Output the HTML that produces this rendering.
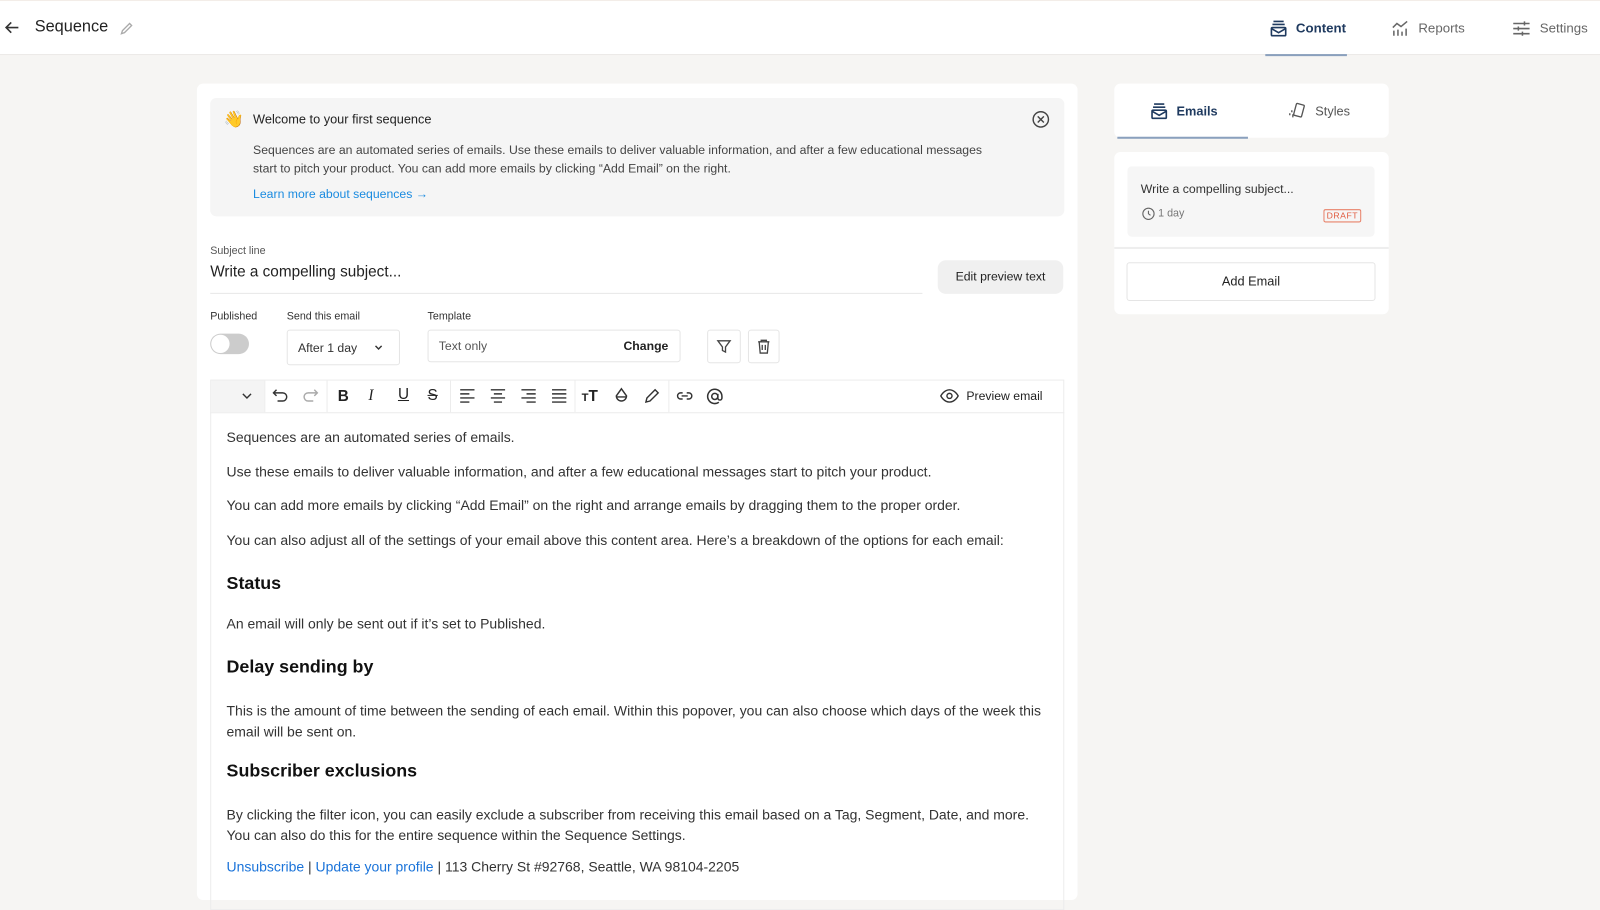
<!DOCTYPE html>
<html><head><meta charset="utf-8"><style>
*{box-sizing:border-box;margin:0;padding:0}
body{width:1600px;height:881px;overflow:hidden;background:#f6f5f3;font-family:"Liberation Sans",sans-serif;color:#222;position:relative}
#w{position:absolute;left:0;top:0;width:1568px;height:864px;transform:scale(1.0204);transform-origin:0 0}
.abs{position:absolute}
.hdr{left:0;top:0;width:1600px;height:54px;background:#fff;border-bottom:1px solid #ebe9e6;border-top:1px solid #f3ede8}
svg{display:block}
.t{white-space:nowrap}
.body p{font-size:13.7px;color:#333;white-space:nowrap;position:absolute;left:222px}
.body h3{font-size:17.5px;font-weight:bold;color:#111;position:absolute;left:222px}
.ic{position:absolute;top:379px}
a{color:#1a73d9}
</style></head><body><div id="w">
<div class="abs hdr"></div>
<svg class="abs" style="left:4px;top:19px" width="16" height="16" viewBox="0 0 16 16"><path d="M14 8H2M7 3L2 8l5 5" stroke="#333" stroke-width="1.6" fill="none"/></svg>
<div class="abs t" style="left:34px;top:18px;font-size:16px;color:#222">Sequence</div>
<svg class="abs" style="left:116px;top:20px" width="16" height="16" viewBox="0 0 16 16"><path d="M3 13l1-3 7-7 2 2-7 7z" stroke="#aaa" stroke-width="1.3" fill="none"/></svg>

<svg class="abs" style="left:1244px;top:19px" width="18" height="18" viewBox="0 0 18 18" fill="none" stroke="#1f3a5f" stroke-width="1.6"><path d="M4 2h10M3 5h12"/><rect x="2" y="8" width="14" height="8" rx="1"/><path d="M2 9l7 4 7-4"/></svg>
<div class="abs t" style="left:1270px;top:20px;font-size:13px;font-weight:bold;color:#1f3a5f">Content</div>
<div class="abs" style="left:1240px;top:53px;width:80px;height:2px;background:#8aa0bd"></div>
<svg class="abs" style="left:1363px;top:19px" width="18" height="18" viewBox="0 0 18 18" fill="none" stroke="#666" stroke-width="1.5"><path d="M2 8l4-4 4 3 6-5M3 11v5M7 10v6M11 12v4M15 9v7"/></svg>
<div class="abs t" style="left:1390px;top:20px;font-size:13px;color:#666">Reports</div>
<svg class="abs" style="left:1482px;top:19px" width="18" height="18" viewBox="0 0 18 18" fill="none" stroke="#666" stroke-width="1.5"><path d="M1 4h16M1 9h16M1 14h16M12 2v4M6 7v4M10 12v4"/></svg>
<div class="abs t" style="left:1509px;top:20px;font-size:13px;color:#666">Settings</div>

<div class="abs" style="left:193px;top:82px;width:863px;height:800px;background:#fff;border-radius:6px"></div>
<div class="abs" style="left:206px;top:96px;width:837px;height:116px;background:#f5f5f5;border-radius:6px"></div>
<div class="abs t" style="left:219px;top:107px;font-size:16px">👋</div>
<div class="abs t" style="left:248px;top:110px;font-size:12.5px;color:#222">Welcome to your first sequence</div>
<div class="abs t" style="left:248px;top:138px;font-size:12px;color:#444;line-height:18px">Sequences are an automated series of emails. Use these emails to deliver valuable information, and after a few educational messages<br>start to pitch your product. You can add more emails by clicking “Add Email” on the right.</div>
<div class="abs t" style="left:248px;top:183px;font-size:12px;color:#1a8be0">Learn more about sequences →</div>
<svg class="abs" style="left:1011px;top:108px" width="18" height="18" viewBox="0 0 18 18" fill="none" stroke="#444" stroke-width="1.4"><circle cx="9" cy="9" r="7.5"/><path d="M6 6l6 6M12 6l-6 6"/></svg>

<div class="abs t" style="left:206px;top:240px;font-size:10.5px;color:#555">Subject line</div>
<div class="abs t" style="left:206px;top:258px;font-size:15px;color:#222">Write a compelling subject...</div>
<div class="abs" style="left:206px;top:287px;width:698px;height:1px;background:#e8e8e8"></div>
<div class="abs t" style="left:919px;top:255px;width:123px;height:33px;background:#f0f0f0;border-radius:8px;font-size:12px;text-align:center;line-height:33px;color:#222">Edit preview text</div>

<div class="abs t" style="left:206px;top:304px;font-size:10.5px;color:#333">Published</div>
<div class="abs t" style="left:281px;top:304px;font-size:10.5px;color:#333">Send this email</div>
<div class="abs t" style="left:419px;top:304px;font-size:10.5px;color:#333">Template</div>
<div class="abs" style="left:206px;top:327px;width:38px;height:20px;border-radius:10px;background:#ccc"></div>
<div class="abs" style="left:207px;top:328px;width:18px;height:18px;border-radius:9px;background:#fff"></div>
<div class="abs" style="left:281px;top:323px;width:111px;height:35px;border:1px solid #e5e5e5;border-radius:3px"></div>
<div class="abs t" style="left:292px;top:334px;font-size:12px;color:#333">After 1 day</div>
<svg class="abs" style="left:366px;top:336px" width="10" height="10" viewBox="0 0 10 10"><path d="M2 3l3 3 3-3" stroke="#333" stroke-width="1.4" fill="none"/></svg>
<div class="abs" style="left:419px;top:323px;width:248px;height:32px;border:1px solid #e5e5e5;border-radius:3px"></div>
<div class="abs t" style="left:430px;top:332px;font-size:12px;color:#555">Text only</div>
<div class="abs t" style="left:611px;top:332px;font-size:12px;color:#222;font-weight:bold">Change</div>
<div class="abs" style="left:693px;top:323px;width:33px;height:33px;border:1px solid #e5e5e5;border-radius:3px"></div>
<svg class="abs" style="left:702px;top:332px" width="15" height="15" viewBox="0 0 15 15" fill="none" stroke="#444" stroke-width="1.3"><path d="M1.5 2h12l-4.5 6v5l-3-1.5V8z"/></svg>
<div class="abs" style="left:733px;top:323px;width:31px;height:33px;border:1px solid #e5e5e5;border-radius:3px"></div>
<svg class="abs" style="left:741px;top:332px" width="15" height="15" viewBox="0 0 15 15" fill="none" stroke="#444" stroke-width="1.3"><path d="M2 3h11M5 3V1.5h5V3M3 3l1 11h7l1-11M6 6v5M9 6v5"/></svg>

<div class="abs" style="left:206px;top:372px;width:837px;height:520px;border:1px solid #ececec"></div>
<div class="abs" style="left:206px;top:404px;width:837px;height:1px;background:#ececec"></div>
<div class="abs" style="left:207px;top:373px;width:52px;height:31px;background:#f4f4f4"></div>
<svg class="abs" style="left:236px;top:383px" width="12" height="10" viewBox="0 0 12 10"><path d="M2 3l4 4 4-4" stroke="#333" stroke-width="1.4" fill="none"/></svg>
<div class="abs" style="left:259px;top:373px;width:1px;height:31px;background:#ececec"></div>
<div class="abs" style="left:320px;top:373px;width:1px;height:31px;background:#ececec"></div>
<div class="abs" style="left:441px;top:373px;width:1px;height:31px;background:#ececec"></div>
<div class="abs" style="left:563px;top:373px;width:1px;height:31px;background:#ececec"></div>
<div class="abs" style="left:655px;top:373px;width:1px;height:31px;background:#ececec"></div>
<svg class="ic" style="left:266px" width="18" height="18" viewBox="0 0 18 18" fill="none" stroke="#333" stroke-width="1.4"><path d="M5 3L2 6l3 3M2 6h9a4 4 0 010 8H6"/></svg>
<svg class="ic" style="left:295px" width="18" height="18" viewBox="0 0 18 18" fill="none" stroke="#aaa" stroke-width="1.4"><path d="M13 3l3 3-3 3M16 6H7a4 4 0 000 8h5"/></svg>
<div class="ic t" style="left:331px;top:380px;font-size:15px;font-weight:bold">B</div>
<div class="ic t" style="left:361px;top:380px;font-size:15px;font-style:italic;font-family:'Liberation Serif',serif">I</div>
<div class="ic t" style="left:390px;top:378px;font-size:15px;text-decoration:underline">U</div>
<div class="ic t" style="left:419px;top:379px;font-size:15px;text-decoration:line-through">S</div>
<svg class="ic" style="left:450px" width="16" height="18" viewBox="0 0 16 18" stroke="#333" stroke-width="1.4"><path d="M1 3h14M1 7h9M1 11h14M1 15h9"/></svg>
<svg class="ic" style="left:480px" width="16" height="18" viewBox="0 0 16 18" stroke="#333" stroke-width="1.4"><path d="M1 3h14M4 7h8M1 11h14M4 15h8"/></svg>
<svg class="ic" style="left:510px" width="16" height="18" viewBox="0 0 16 18" stroke="#333" stroke-width="1.4"><path d="M1 3h14M6 7h9M1 11h14M6 15h9"/></svg>
<svg class="ic" style="left:540px" width="16" height="18" viewBox="0 0 16 18" stroke="#333" stroke-width="1.4"><path d="M1 3h14M1 7h14M1 11h14M1 15h14"/></svg>
<div class="ic t" style="left:570px;top:380px;font-size:15px;font-weight:bold"><span style="font-size:11px">T</span>T</div>
<svg class="ic" style="left:600px" width="18" height="18" viewBox="0 0 18 18" fill="none" stroke="#333" stroke-width="1.4"><path d="M9 2l5 7a5 5 0 01-10 0z"/><path d="M4 10h10" /></svg>
<svg class="ic" style="left:630px" width="18" height="18" viewBox="0 0 18 18" fill="none" stroke="#333" stroke-width="1.4"><path d="M3 15l1-4 8-8 3 3-8 8z"/></svg>
<svg class="ic" style="left:662px" width="18" height="18" viewBox="0 0 18 18" fill="none" stroke="#333" stroke-width="1.4"><path d="M7 6H5a3 3 0 000 6h2M11 6h2a3 3 0 010 6h-2M6 9h6"/></svg>
<svg class="ic" style="left:691px" width="19" height="19" viewBox="0 0 19 19" fill="none" stroke="#333" stroke-width="1.5"><circle cx="9.5" cy="9.5" r="3"/><path d="M12.5 7v4a2 2 0 004 0V9.5a7 7 0 10-3 5.7"/></svg>
<svg class="ic" style="left:921px;top:380px" width="19" height="16" viewBox="0 0 19 16" fill="none" stroke="#333" stroke-width="1.4"><path d="M1 8s3-6 8.5-6S18 8 18 8s-3 6-8.5 6S1 8 1 8z"/><circle cx="9.5" cy="8" r="2.5"/></svg>
<div class="abs t" style="left:947px;top:381px;font-size:12px;color:#222">Preview email</div>

<div class="body">
<p style="top:421px">Sequences are an automated series of emails.</p>
<p style="top:455px">Use these emails to deliver valuable information, and after a few educational messages start to pitch your product.</p>
<p style="top:488px">You can add more emails by clicking “Add Email” on the right and arrange emails by dragging them to the proper order.</p>
<p style="top:522px">You can also adjust all of the settings of your email above this content area. Here’s a breakdown of the options for each email:</p>
<h3 style="top:561px">Status</h3>
<p style="top:604px">An email will only be sent out if it’s set to Published.</p>
<h3 style="top:643px">Delay sending by</h3>
<p style="top:686px;line-height:21px">This is the amount of time between the sending of each email. Within this popover, you can also choose which days of the week this<br>email will be sent on.</p>
<h3 style="top:745px">Subscriber exclusions</h3>
<p style="top:789px;line-height:20px">By clicking the filter icon, you can easily exclude a subscriber from receiving this email based on a Tag, Segment, Date, and more.<br>You can also do this for the entire sequence within the Sequence Settings.</p>
<p style="top:842px"><a>Unsubscribe</a> | <a>Update your profile</a> | 113 Cherry St #92768, Seattle, WA 98104-2205</p>
</div>

<div class="abs" style="left:1092px;top:82px;width:269px;height:53px;background:#fff;border-radius:6px"></div>
<div class="abs" style="left:1095px;top:134px;width:128px;height:2px;background:#8aa0bd"></div>
<svg class="abs" style="left:1127px;top:100px" width="18" height="18" viewBox="0 0 18 18" fill="none" stroke="#1f3a5f" stroke-width="1.6"><path d="M4 2h10M3 5h12"/><rect x="2" y="8" width="14" height="8" rx="1"/><path d="M2 9l7 4 7-4"/></svg>
<div class="abs t" style="left:1153px;top:102px;font-size:12.5px;font-weight:bold;color:#1f3a5f">Emails</div>
<svg class="abs" style="left:1263px;top:100px" width="18" height="18" viewBox="0 0 18 18" fill="none" stroke="#555" stroke-width="1.3"><rect x="6" y="2" width="8" height="12" rx="1" transform="rotate(15 10 8)"/><path d="M3 8v2M1 11v2M4 12v3"/></svg>
<div class="abs t" style="left:1289px;top:102px;font-size:12.5px;color:#555">Styles</div>
<div class="abs" style="left:1092px;top:149px;width:269px;height:159px;background:#fff;border-radius:6px"></div>
<div class="abs" style="left:1105px;top:163px;width:242px;height:69px;background:#f6f6f6;border-radius:4px"></div>
<div class="abs t" style="left:1118px;top:178px;font-size:12px;color:#333">Write a compelling subject...</div>
<svg class="abs" style="left:1119px;top:203px" width="13" height="13" viewBox="0 0 13 13" fill="none" stroke="#666" stroke-width="1.1"><circle cx="6.5" cy="6.5" r="5.5"/><path d="M6.5 3.5v3l2 1.5"/></svg>
<div class="abs t" style="left:1135px;top:203px;font-size:10.5px;color:#777">1 day</div>
<div class="abs t" style="left:1297px;top:205px;width:37px;height:13px;border:1px solid #e8826a;border-radius:2px;color:#e0593d;font-size:8.5px;text-align:center;line-height:11px;letter-spacing:.5px">DRAFT</div>
<div class="abs" style="left:1092px;top:242px;width:269px;height:2px;background:#eee"></div>
<div class="abs t" style="left:1104px;top:257px;width:244px;height:38px;border:1px solid #e5e5e5;border-radius:3px;font-size:12.5px;text-align:center;line-height:36px;color:#222">Add Email</div>
</div></body></html>
